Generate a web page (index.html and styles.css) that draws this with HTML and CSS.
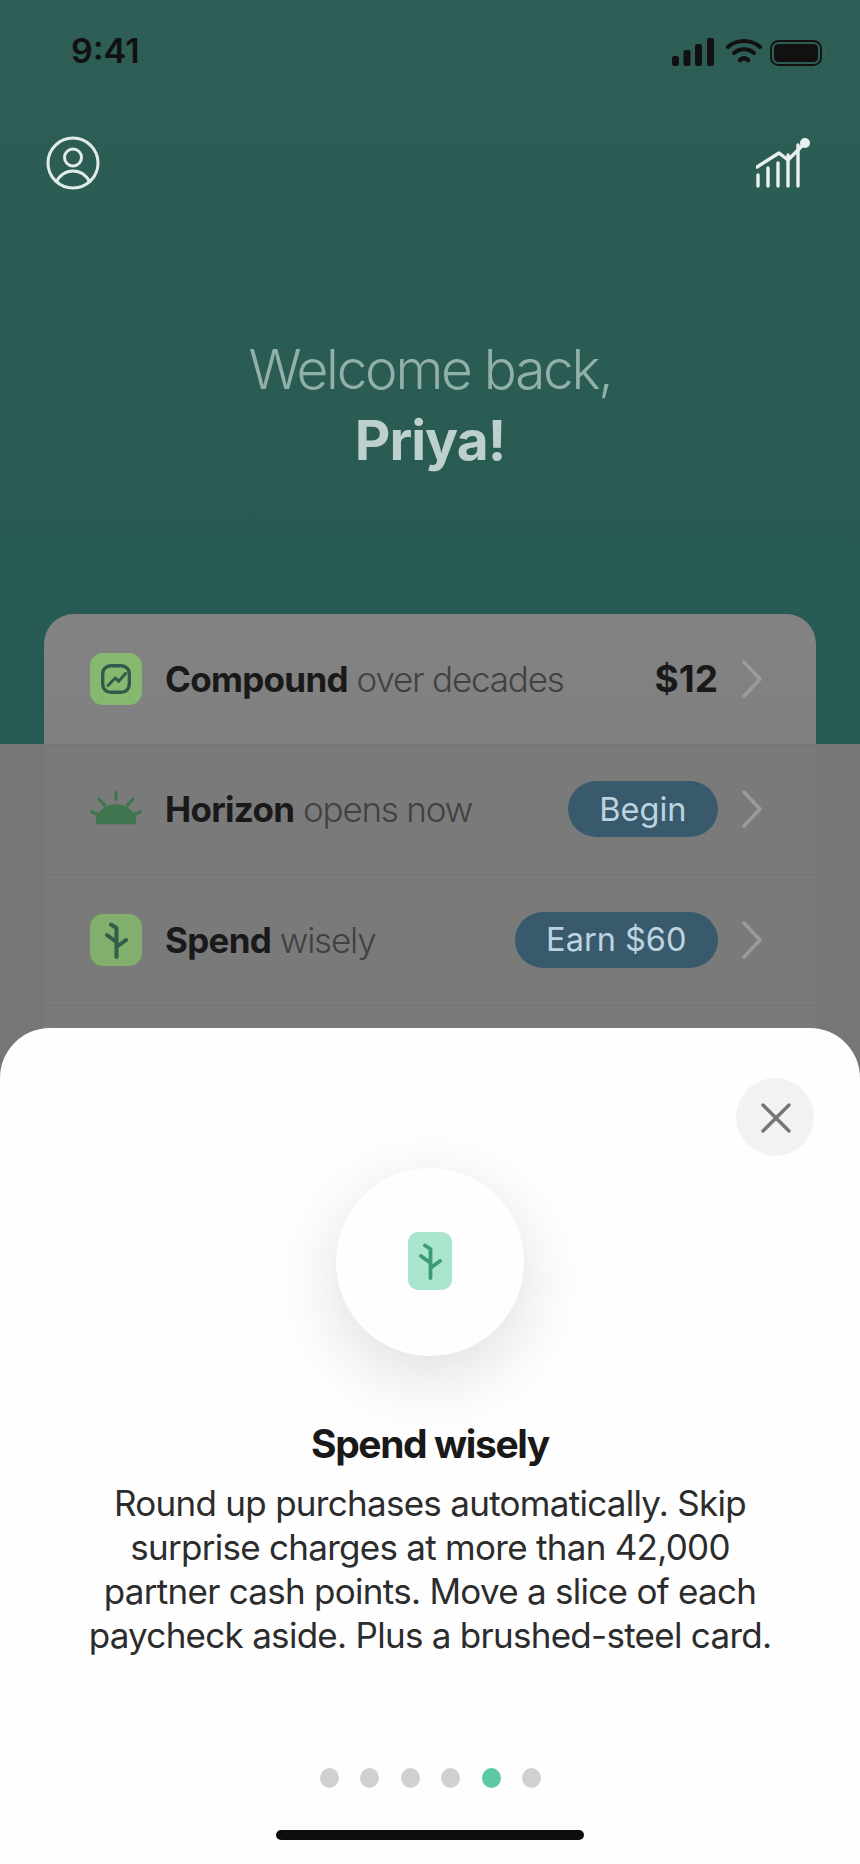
FILE: index.html
```html
<!DOCTYPE html>
<html lang="en">
<head>
<meta charset="utf-8">
<title>Welcome back</title>
<link rel="stylesheet" href="styles.css">
</head>
<body>
<div class="screen">
  <div class="status">
    <span class="time">9:41</span>
    <div class="status-icons">
      <svg class="sig" width="42" height="28" viewBox="0 0 42 28"><rect x="0" y="18" width="7" height="10" rx="2.500"/><rect x="11.500" y="12" width="7" height="16" rx="2"/><rect x="23" y="6" width="7" height="22" rx="2"/><rect x="35" y="0" width="7" height="28" rx="2"/></svg>
      <svg class="wifi" width="36" height="26" viewBox="0 0 36 26" fill="none" stroke="#111" stroke-linecap="round"><path d="M2 9C11 1 25 1 34 9" stroke-width="4"/><path d="M8 15C14 10 22 10 28 15" stroke-width="4"/><path d="M14 22C16.500 20 19.500 20 22 22" stroke-width="4.500"/></svg>
      <svg class="batt" width="56" height="26" viewBox="0 0 56 26"><rect x="1" y="1" width="50" height="24" rx="7.500" fill="none" stroke="#111" stroke-width="1.800"/><rect x="4" y="4" width="44" height="18" rx="4.500" fill="#111"/><rect x="53.500" y="9" width="1.500" height="8" rx=".7" fill="#3f6059"/></svg>
    </div>
  </div>

  <div class="nav">
    <svg width="54" height="54" viewBox="0 0 54 54" fill="none" stroke="#e3ebe9" stroke-width="3"><circle cx="27" cy="27" r="25"/><circle cx="27" cy="21.500" r="8.500"/><path d="M10 47C13 39 20 35 27 35S41 39 44 47"/></svg>
    <svg width="58" height="52" viewBox="0 0 58 52" fill="none" stroke="#eaf0ee" stroke-width="3.400" stroke-linecap="round" stroke-linejoin="round"><path d="M2 39V50M12 32V50M22 27V50M32 19V50M42 9V50"/><path d="M1 31L23 17L32 24L49 7"/><circle cx="49" cy="7" r="5" fill="#eaf0ee" stroke="none"/></svg>
  </div>

  <div class="welcome">
    <p class="hello">Welcome back,</p>
    <p class="name">Priya!</p>
  </div>

  <div class="card">
    <div class="row">
      <span class="tile tile-bright">
        <svg width="30" height="30" viewBox="0 0 30 30" fill="none" stroke="#35594a" stroke-linecap="round" stroke-linejoin="round"><rect x="1.700" y="1.700" width="26.600" height="26.600" rx="8" stroke-width="3.400"/><path d="M7 21.500L14.300 14L17.700 17.300L24.500 9.500" stroke-width="3"/></svg>
      </span>
      <span class="label"><b>Compound</b> over decades</span>
      <b class="amount">$12</b>
      <svg class="chev" width="20" height="38" viewBox="0 0 20 38" fill="none" stroke="#9b9b9b" stroke-width="3.500" stroke-linecap="round" stroke-linejoin="round"><path d="M2 2L18 19L2 36"/></svg>
    </div>
    <div class="row">
      <span class="sun">
        <svg width="54" height="38" viewBox="0 0 54 38" fill="none" stroke="#3f7650" stroke-width="3.500" stroke-linecap="round"><path d="M27 3V10M9.500 10L15 16M44.500 10L39 16M1.800 23L8 25.500M52.200 23L46 25.500"/><path d="M6 36V33C6 23 15 15 27 15S48 23 48 33V36Z" fill="#3f7650" stroke="none"/></svg>
      </span>
      <span class="label"><b>Horizon</b> opens now</span>
      <span class="pill">Begin</span>
      <svg class="chev" width="20" height="38" viewBox="0 0 20 38" fill="none" stroke="#9b9b9b" stroke-width="3.500" stroke-linecap="round" stroke-linejoin="round"><path d="M2 2L18 19L2 36"/></svg>
    </div>
    <div class="row">
      <span class="tile">
        <svg width="24" height="38" viewBox="0 0 24 38" fill="none" stroke="#2f5f47" stroke-width="4" stroke-linecap="round" stroke-linejoin="round"><path d="M12.500 36V7L7 3.500M12.500 21L3 14M12.500 26L22 19"/></svg>
      </span>
      <span class="label"><b>Spend</b> wisely</span>
      <span class="pill">Earn $60</span>
      <svg class="chev" width="20" height="38" viewBox="0 0 20 38" fill="none" stroke="#9b9b9b" stroke-width="3.500" stroke-linecap="round" stroke-linejoin="round"><path d="M2 2L18 19L2 36"/></svg>
    </div>
  </div>

  <div class="sheet">
    <button class="close" aria-label="Close">
      <svg width="30" height="30" viewBox="0 0 30 30" fill="none" stroke="#757575" stroke-width="3.400" stroke-linecap="round"><path d="M2 2L28 28M28 2L2 28"/></svg>
    </button>
    <div class="badge">
      <span class="badge-tile">
        <svg width="24" height="38" viewBox="0 0 24 38" fill="none" stroke="#3c9a75" stroke-width="3.800" stroke-linecap="round" stroke-linejoin="round"><path d="M12.500 36V7L7 3.500M12.500 21L3 14M12.500 26L22 19"/></svg>
      </span>
    </div>
    <h2 class="title">Spend wisely</h2>
    <p class="body">Round up purchases automatically. Skip surprise charges at more than 42,000 partner cash points. Move a slice of each paycheck aside. Plus a brushed-steel card.</p>
    <div class="dots">
      <i class="dot"></i><i class="dot"></i><i class="dot"></i><i class="dot"></i><i class="dot on"></i><i class="dot"></i>
    </div>
    <div class="home"></div>
  </div>
</div>
</body>
</html>
```

FILE: styles.css
```css
* { box-sizing: border-box; }
html, body { margin: 0; padding: 0; }
body { font-family: Inter, "Liberation Sans", sans-serif; background: #767676; }
p, h2 { margin: 0; }

.screen {
  position: relative;
  width: 860px;
  height: 1864px;
  overflow: hidden;
  background: linear-gradient(180deg, #2e5e55 0, #265a52 744px, #767676 744px);
}

.status {
  display: flex;
  justify-content: space-between;
  align-items: flex-start;
  height: 136px;
  padding: 31px 34px 0 71px;
}
.time { font: 600 34px/40px Inter, sans-serif; color: #111; }
.status-icons { display: flex; align-items: flex-start; gap: 12px; margin-top: 7px; }
.sig { fill: #111; }
.batt { margin-top: 2px; margin-left: -4px; }

.nav {
  display: flex;
  justify-content: space-between;
  padding: 0 46px;
}

.welcome {
  margin-top: 144px;
  text-align: center;
}
.hello { font-size: 55px; line-height: 71px; font-weight: 300; letter-spacing: -2.300px; color: #92b0aa; }
.name { font-size: 55px; line-height: 71px; font-weight: 700; letter-spacing: -1px; color: #bdd0cd; }

.card {
  margin: 138px 44px 0;
  padding-bottom: 60px;
  border-radius: 30px 30px 0 0;
  background: linear-gradient(180deg, #838383 0, #808080 130px, #7a7a7a 130px);
}
.row {
  display: flex;
  align-items: center;
  height: 130.500px;
  padding: 0 54px 0 46px;
  border-bottom: 1px solid #747474;
}
.tile {
  flex: none;
  display: flex;
  align-items: center;
  justify-content: center;
  width: 52px;
  height: 52px;
  border-radius: 13px;
  background: #82af6d;
}
.tile-bright { background: #85b96f; }
.sun { flex: none; display: flex; width: 52px; justify-content: center; margin-top: -3px; }
.label {
  flex: 1;
  margin-left: 23px;
  font-size: 35px;
  letter-spacing: -1.200px;
  font-weight: 300;
  color: #414141;
  white-space: nowrap;
}
.label b { font-weight: 700; color: #191919; letter-spacing: -.7px; }
.amount { font-size: 37px; font-weight: 700; color: #191919; letter-spacing: 0; }
.pill {
  display: flex;
  align-items: center;
  height: 56px;
  padding: 0 31.500px;
  border-radius: 28px;
  background: #385a6c;
  color: #bdd3e0;
  font-size: 32.500px;
  font-weight: 400;
}
.chev { flex: none; margin-left: 24px; }

.sheet {
  position: absolute;
  left: 0;
  right: 0;
  top: 1028px;
  bottom: 0;
  display: flex;
  flex-direction: column;
  align-items: center;
  border-radius: 50px 50px 0 0;
  background: #fefefe;
}
.close {
  position: absolute;
  top: 50px;
  right: 46px;
  display: flex;
  align-items: center;
  justify-content: center;
  width: 78px;
  height: 78px;
  padding: 2px 0 0 2px;
  border: 0;
  border-radius: 50%;
  background: #f2f2f2;
}
.badge {
  display: flex;
  align-items: center;
  justify-content: center;
  width: 188px;
  height: 188px;
  margin-top: 140px;
  border-radius: 50%;
  background: #fefefe;
  box-shadow: 0 20px 70px rgba(0, 0, 0, .13);
}
.badge-tile {
  display: flex;
  align-items: center;
  justify-content: center;
  width: 44px;
  height: 58px;
  margin-bottom: 2px;
  border-radius: 10px;
  background: #aae6ce;
}
.title {
  margin-top: 63px;
  font-size: 39px;
  line-height: 50px;
  font-weight: 700;
  letter-spacing: -1.400px;
  color: #191919;
}
.body {
  width: 720px;
  margin-top: 12px;
  font-size: 35px;
  line-height: 44px;
  font-weight: 400;
  letter-spacing: -.72px;
  text-align: center;
  color: #2c2c2c;
}
.dots {
  position: absolute;
  top: 740px;
  left: 320px;
  display: flex;
  gap: 21.400px;
}
.dot { width: 19px; height: 20px; border-radius: 50%; background: #d0d0d0; }
.dot.on { background: #5cc8a4; }
.home {
  position: absolute;
  left: 276px;
  bottom: 24px;
  width: 308px;
  height: 10px;
  border-radius: 5px;
  background: #0e0e0e;
}
```
